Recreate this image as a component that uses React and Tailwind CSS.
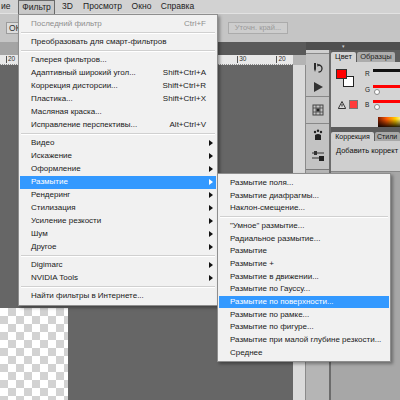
import React from "react";

const mainItems = [
  { t: "Последний фильтр", s: "Ctrl+F", dis: true },
  { sep: true },
  { t: "Преобразовать для смарт-фильтров" },
  { sep: true },
  { t: "Галерея фильтров..." },
  { t: "Адаптивный широкий угол...", s: "Shift+Ctrl+A" },
  { t: "Коррекция дисторсии...", s: "Shift+Ctrl+R" },
  { t: "Пластика...", s: "Shift+Ctrl+X" },
  { t: "Масляная краска..." },
  { t: "Исправление перспективы...", s: "Alt+Ctrl+V" },
  { sep: true },
  { t: "Видео", a: true },
  { t: "Искажение", a: true },
  { t: "Оформление", a: true },
  { t: "Размытие", a: true, hi: true },
  { t: "Рендеринг", a: true },
  { t: "Стилизация", a: true },
  { t: "Усиление резкости", a: true },
  { t: "Шум", a: true },
  { t: "Другое", a: true },
  { sep: true },
  { t: "Digimarc", a: true },
  { t: "NVIDIA Tools", a: true },
  { sep: true },
  { t: "Найти фильтры в Интернете..." },
];

const subItems = [
  { t: "Размытие поля..." },
  { t: "Размытие диафрагмы..." },
  { t: "Наклон-смещение..." },
  { sep: true },
  { t: "\"Умное\" размытие..." },
  { t: "Радиальное размытие..." },
  { t: "Размытие" },
  { t: "Размытие +" },
  { t: "Размытие в движении..." },
  { t: "Размытие по Гауссу..." },
  { t: "Размытие по поверхности...", hi: true },
  { t: "Размытие по рамке..." },
  { t: "Размытие по фигуре..." },
  { t: "Размытие при малой глубине резкости..." },
  { t: "Среднее" },
];

function Arrow({ white }) {
  return (
    <svg width="4" height="6" viewBox="0 0 4 6" className="mr-[3px] shrink-0">
      <path d="M0 0 L4 3 L0 6 Z" fill={white ? "#ffffff" : "#111111"} />
    </svg>
  );
}

function Sep() {
  return (
    <div className="h-[5px] flex flex-col justify-center mx-[2px]">
      <div className="h-px bg-[#d0d0d0]" />
      <div className="h-px bg-white" />
    </div>
  );
}

function MenuItem({ it, h }) {
  const color = it.hi ? "bg-[#3399ff] text-white" : it.dis ? "text-[#8e8e8e]" : "text-[#1a1a1a]";
  return (
    <div className={`${h} flex items-center mx-px pl-[11px] whitespace-nowrap ${color}`}>
      <span className="flex-1">{it.t}</span>
      {it.s && <span className="pr-[10px]">{it.s}</span>}
      {it.a && <Arrow white={it.hi} />}
    </div>
  );
}

function HistoryIcon() {
  return (
    <svg width="12" height="12" viewBox="0 0 12 12">
      <path d="M2 1 L4 1 L4 7 L3 10 L2 7 Z" fill="#2a2a2a" />
      <path d="M6.5 3 A3.5 3.5 0 1 1 6.5 10" stroke="#2a2a2a" strokeWidth="1.3" fill="none" />
      <path d="M5 1.5 L8 3 L5.5 4.8 Z" fill="#2a2a2a" />
    </svg>
  );
}

function PlayIcon() {
  return (
    <svg width="12" height="12" viewBox="0 0 12 12">
      <path d="M2 1 L11 6 L2 11 Z" fill="#333" />
    </svg>
  );
}

function GridIcon() {
  return (
    <svg width="12" height="12" viewBox="0 0 12 12">
      <rect x="1" y="1" width="10" height="10" fill="none" stroke="#444" strokeWidth="1" />
      <path d="M1 4 H11 M1 8 H11 M4 1 V11 M8 1 V11" stroke="#444" strokeWidth="0.8" />
      <rect x="4.5" y="4.5" width="3" height="3" fill="#222" />
    </svg>
  );
}

function PawIcon() {
  return (
    <svg width="12" height="12" viewBox="0 0 12 12">
      <circle cx="3" cy="3" r="1.2" fill="#222" />
      <circle cx="6" cy="1.8" r="1.2" fill="#222" />
      <circle cx="9" cy="3" r="1.2" fill="#222" />
      <path d="M3 6 Q6 4 9 6 L9 11 L3 11 Z" fill="#222" />
    </svg>
  );
}

function ToolIcon() {
  return (
    <svg width="14" height="12" viewBox="0 0 14 12">
      <path d="M1 3 H13" stroke="#333" strokeWidth="1" />
      <rect x="3" y="1" width="3" height="4" fill="#333" />
      <path d="M1 8 H8" stroke="#333" strokeWidth="1" />
      <rect x="8" y="6" width="5" height="5" fill="#222" />
    </svg>
  );
}

export default function App() {
  return (
    <div className="w-[400px] h-[400px] overflow-hidden relative bg-[#666666] flex flex-col text-[8.5px] leading-none font-['Liberation_Sans',Arial,sans-serif] select-none">
      {/* Menu bar */}
      <div className="h-[14px] shrink-0 bg-[#d2d2d2] flex items-center text-[#222] border-b border-[#e2e2e2]">
        <div className="w-[18px] pl-px">ие</div>
        <div className="w-[37px] h-[14px] flex items-center justify-center border border-[#6a6a6a] border-b-0 bg-[#c9c9c9]">Фильтр</div>
        <div className="w-[25px] text-center">3D</div>
        <div className="w-[45px] text-center">Просмотр</div>
        <div className="w-[33px] text-center">Окно</div>
        <div className="w-[39px] text-center">Справка</div>
      </div>

      {/* Options bar */}
      <div className="h-[28px] shrink-0 bg-[#c5c5c5] flex items-center pl-[6px]">
        <div className="w-[30px] h-[12px] border border-[#9c9c9c] bg-[#dcdcdc] text-[#333] flex items-center pl-[2px]">OK</div>
        <div className="ml-[192px] w-[60px] h-[12px] border border-[#ababab] bg-[#cdcdcd] text-[#9a9a9a] text-[7.5px] flex items-center justify-center">Уточн. край...</div>
      </div>

      {/* Workspace */}
      <div className="flex-1 flex min-h-0">
        {/* Document */}
        <div className="w-[306px] flex flex-col">
          <div className="h-[13px] shrink-0 bg-[#5a5a5a] flex">
            <div className="w-[150px] bg-[#a4a4a4] border-r border-[#777]" />
          </div>
          <div className="h-[10px] shrink-0 flex">
            <div className="w-[293px] bg-[#e8e8e8] relative border-b border-dotted border-[#8a8a8a] flex items-start text-[6.5px] text-[#333]">
              <span className="ml-[6px] mt-[1px] border-l border-[#555] pl-px">20</span>
              <span className="ml-[222px] mt-[1px] border-l border-[#555] pl-px">30</span>
              <span className="ml-[30px] mt-[1px] border-l border-[#555] pl-px">20</span>
            </div>
            <div className="flex-1 bg-[#b4b4b4]" />
          </div>
          <div className="flex-1 flex min-h-0">
            <div className="w-[293px] bg-[#666666] flex flex-col justify-end">
              <div className="w-[68px] h-[92px] bg-[repeating-conic-gradient(#d2d2d2_0%_25%,#ffffff_0%_50%)] bg-[length:16px_16px]" />
            </div>
            <div className="flex-1 bg-[#dadada] border-r border-[#8a8a8a]" />
          </div>
        </div>

        {/* Dock */}
        <div className="flex-1 flex flex-col">
          <div className="h-[8px] shrink-0 bg-[#4f4f4f] flex justify-center items-center">
            <span className="text-[#ccc] text-[5px] ml-[-20px]">▾</span>
          </div>
          <div className="flex-1 flex min-h-0">
            {/* icon column */}
            <div className="w-[25px] bg-[#b5b5b5] flex flex-col border-r-2 border-[#6c6c6c]">
              <div className="h-[120px] bg-[#c3c3c3] flex flex-col border-b border-[#7a7a7a]">
                <div className="h-[4px] border-b border-[#8a8a8a] bg-[#d0d0d0]" />
                <div className="h-[43px] flex flex-col items-center justify-around pt-[4px] border-b border-[#888]">
                  <HistoryIcon />
                  <PlayIcon />
                </div>
                <div className="h-[27px] flex items-center justify-center border-b border-[#888]">
                  <GridIcon />
                </div>
                <div className="flex-1 flex flex-col items-center justify-around pb-[2px]">
                  <PawIcon />
                  <ToolIcon />
                </div>
              </div>
            </div>
            {/* panels */}
            <div className="flex-1 flex flex-col bg-[#a7a7a7]">
              <div className="h-[12px] shrink-0 bg-[#5c5c5c] flex items-end text-[7.5px] text-[#111]">
                <div className="w-[25px] h-[10px] bg-[#d4d4d4] rounded-t-[2px] flex items-center justify-center">Цвет</div>
                <div className="w-[38px] h-[10px] bg-[#acacac] rounded-t-[2px] ml-px flex items-center justify-center text-[#222]">Образцы</div>
              </div>
              <div className="h-[65px] shrink-0 bg-[#d4d4d4] flex pt-[7px] pl-[5px]">
                <div className="w-[29px] flex flex-col">
                  <div className="relative h-[25px]">
                    <div className="absolute left-[7px] top-[7px] w-[11px] h-[11px] bg-white border border-[#222]" />
                    <div className="absolute left-0 top-0 w-[11px] h-[10px] bg-[#ff0000] border border-[#333]" />
                  </div>
                  <div className="flex items-center mt-[6px] ml-[2px] gap-[3px]">
                    <svg width="8" height="8" viewBox="0 0 8 8">
                      <path d="M4 0.5 L7.7 7.5 L0.3 7.5 Z" fill="#ddd" stroke="#222" strokeWidth="0.9" />
                      <path d="M4 3 V5.5" stroke="#222" strokeWidth="1" />
                    </svg>
                    <div className="w-[9px] h-[9px] border border-[#777] bg-[#ff3b3b]" />
                  </div>
                </div>
                <div className="flex-1 flex flex-col">
                  {[
                    ["R", "bg-[#111]", false],
                    ["G", "bg-[#ff0000]", true],
                    ["B", "bg-[#ff0000]", true],
                  ].map(([l, c, k]) => (
                    <div key={l} className="h-[16px] flex">
                      <div className="w-[8px] pt-[2px] text-[6.5px] text-[#222]">{l}</div>
                      <div className="flex-1 flex flex-col">
                        <div className={`h-[3px] mt-0 ${c}`} />
                        {k && <div className="w-[6px] h-[6px] rounded-full bg-white border border-[#888] mt-[1px] ml-[1px]" />}
                      </div>
                    </div>
                  ))}
                  <div className="ml-[13px] h-[10px] mt-[1px] bg-[linear-gradient(to_bottom,rgba(0,0,0,0)_20%,rgba(0,0,0,0.85)),linear-gradient(to_right,#7a1a00,#ff5a00_40%,#ffd000_80%,#fff07a)]" />
                </div>
              </div>
              <div className="h-[14px] shrink-0 bg-[#5c5c5c] flex items-end text-[7px] text-[#111]">
                <div className="w-[43px] h-[9px] bg-[#d0d0d0] rounded-t-[2px] flex items-center justify-center">Коррекция</div>
                <div className="flex-1 h-[9px] bg-[#a8a8a8] rounded-t-[2px] ml-px pl-[2px] flex items-center overflow-hidden">Стили</div>
              </div>
              <div className="h-[31px] shrink-0 bg-[#cfcfcf] border-b border-[#888] pl-[5px] pt-[6px] text-[7.5px] text-[#111] whitespace-nowrap overflow-hidden">
                Добавить коррект
              </div>
              <div className="flex-1" />
            </div>
          </div>
        </div>
      </div>

      {/* Filter menu */}
      <div className="absolute left-[18px] top-[14px] w-[200px] bg-[#f1f1f1] border border-[#8e8e8e] pt-[2.5px] pb-[2px] text-[8px] shadow-[2px_2px_3px_rgba(0,0,0,0.35)] z-10">
        {mainItems.map((it, i) => (it.sep ? <Sep key={i} /> : <MenuItem key={i} it={it} h="h-[13px]" />))}
      </div>

      {/* Blur submenu */}
      <div className="absolute left-[217px] top-[173px] w-[174px] bg-[#f1f1f1] border border-[#8e8e8e] pt-[2.5px] pb-[2px] text-[8px] shadow-[2px_2px_3px_rgba(0,0,0,0.35)] z-20">
        {subItems.map((it, i) => (it.sep ? <Sep key={i} /> : <MenuItem key={i} it={it} h="h-[12.7px]" />))}
      </div>
    </div>
  );
}
